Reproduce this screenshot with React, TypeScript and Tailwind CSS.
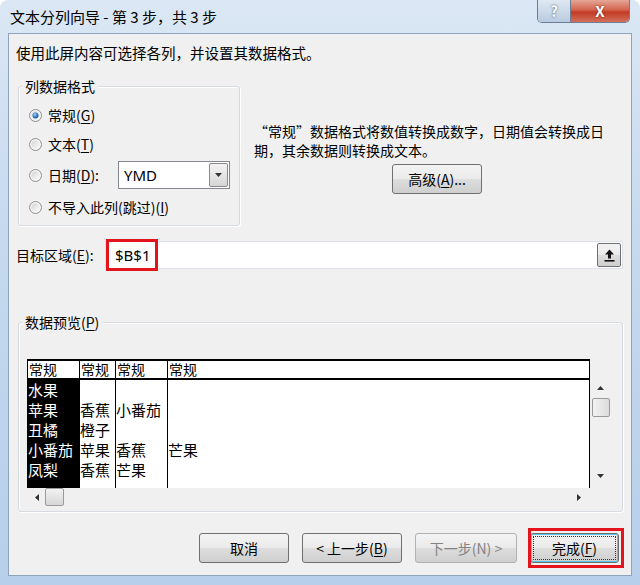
import React from 'react'

function Radio({ checked }: { checked?: boolean }) {
  return (
    <svg width="13" height="13" viewBox="0 0 13 13" className="shrink-0">
      <defs>
        <linearGradient id="rg" x1="0" y1="0" x2="1" y2="1">
          <stop offset="0" stopColor="#d4d4d4" />
          <stop offset="1" stopColor="#fbfbfb" />
        </linearGradient>
        <radialGradient id="rd" cx="0.4" cy="0.35" r="0.7">
          <stop offset="0" stopColor="#a9d3f7" />
          <stop offset="0.5" stopColor="#3b86d4" />
          <stop offset="1" stopColor="#1c4f91" />
        </radialGradient>
      </defs>
      <circle cx="6.5" cy="6.5" r="6" fill="#f4f4f4" stroke="#8f8f8f" />
      <circle cx="6.5" cy="6.5" r="4.2" fill="url(#rg)" />
      {checked && <circle cx="6.5" cy="6.5" r="3" fill="url(#rd)" />}
    </svg>
  )
}

function Btn({ children, className = '', muted }: { children: React.ReactNode; className?: string; muted?: boolean }) {
  return (
    <div
      className={`h-[30px] flex items-center justify-center rounded-[3px] border border-[#707070] bg-[linear-gradient(#f3f3f3_0%,#ebebeb_48%,#dddddd_52%,#cfcfcf_100%)] text-[14px] ${muted ? 'text-[#838383] border-[#adb2b5]' : 'text-black'} ${className}`}
    >
      {children}
    </div>
  )
}

function Tri({ dir }: { dir: 'up' | 'down' | 'left' | 'right' }) {
  const pts = {
    up: '0,4 3.5,0 7,4',
    down: '0,0 7,0 3.5,4',
    left: '4,0 4,7 0,3.5',
    right: '0,0 0,7 4,3.5',
  }[dir]
  const horiz = dir === 'left' || dir === 'right'
  return (
    <svg width={horiz ? 4 : 7} height={horiz ? 7 : 4} viewBox={horiz ? '0 0 4 7' : '0 0 7 4'}>
      <polygon points={pts} fill="#333" />
    </svg>
  )
}

const rows = [
  ['水果', '', '', ''],
  ['苹果', '香蕉', '小番茄', ''],
  ['丑橘', '橙子', '', ''],
  ['小番茄', '苹果', '香蕉', '芒果'],
  ['凤梨', '香蕉', '芒果', ''],
]

export default function App() {
  return (
    <div className="w-[640px] h-[585px] flex flex-col overflow-hidden rounded-t-[8px] bg-[linear-gradient(180deg,#dbe7f4_0%,#c6d9ee_40%,#b7cfea_100%)] font-['Noto_Sans_CJK_SC','Microsoft_YaHei',sans-serif] text-black">
      {/* title bar */}
      <div className="h-[33px] shrink-0 flex items-start relative">
        <div className="pl-[10px] pt-[6px] text-[15px] leading-[22px] whitespace-pre">文本分列向导 - 第 3 步，共 3 步</div>
        <div className="ml-auto mr-[10px] flex h-[23px] rounded-b-[5px] border border-t-0 border-[#6b7d92] overflow-hidden">
          <div className="w-[33px] flex items-center justify-center bg-[linear-gradient(#dfe8f2,#b9cbe0)] border-r border-[#6b7d92] text-[15px] font-bold text-[#fff] [text-shadow:0_0_2px_#2c3e58]">
            ?
          </div>
          <div className="w-[58px] flex items-center justify-center bg-[linear-gradient(#e5a696_0%,#d4644e_45%,#c23a24_55%,#d3705a_100%)] text-[15px] font-bold text-white [text-shadow:0_0_2px_#5a1008]">
            X
          </div>
        </div>
      </div>

      {/* client area */}
      <div className="mx-[8px] h-[543px] shrink-0 bg-[#f0f0f0] border border-[#8ea3bd] pl-[7px] pr-[8px] flex flex-col">
        <div className="mt-[9px] h-[20px] leading-[20px] text-[14.5px]">使用此屏内容可选择各列，并设置其数据格式。</div>

        <div className="flex mt-[23px]">
          {/* group: 列数据格式 */}
          <div className="ml-[2px] w-[222px] h-[140px] relative border border-[#d5dbe0] rounded-[3px] shadow-[inset_1px_1px_0_#fff,1px_1px_0_#fff] pl-[10px] pr-[9px] pt-[14px] text-[14px]">
            <span className="absolute -top-[11px] left-[3px] px-[3px] bg-[#f0f0f0] leading-[20px]">列数据格式</span>
            <div className="h-[29px] flex items-center gap-[6px]">
              <Radio checked />
              <span>常规(<u className="underline-offset-2">G</u>)</span>
            </div>
            <div className="h-[29px] flex items-center gap-[6px]">
              <Radio />
              <span>文本(<u className="underline-offset-2">T</u>)</span>
            </div>
            <div className="h-[32px] flex items-center gap-[6px]">
              <Radio />
              <span>日期(<u className="underline-offset-2">D</u>):</span>
              <div className="ml-auto w-[112px] h-[28px] flex border border-[#828790] bg-white">
                <div className="flex-1 pl-[5px] flex items-center text-[15px] font-['Noto_Sans',sans-serif]">YMD</div>
                <div className="w-[19px] my-[1px] mr-[1px] flex items-center justify-center border border-[#8a8a8a] rounded-[2px] bg-[linear-gradient(#f4f4f4,#d6d6d6)]">
                  <Tri dir="down" />
                </div>
              </div>
            </div>
            <div className="h-[32px] flex items-center gap-[6px]">
              <Radio />
              <span>不导入此列(跳过)(<u className="underline-offset-2">I</u>)</span>
            </div>
          </div>

          {/* description */}
          <div className="ml-[14px] mt-[36px] text-[14px] leading-[19px]">
            <div>“常规”数据格式将数值转换成数字，日期值会转换成日</div>
            <div>期，其余数据则转换成文本。</div>
            <Btn className="ml-[138px] mt-[4px] w-[90px] h-[29px]">
              高级(<u className="underline-offset-2">A</u>)...
            </Btn>
          </div>
        </div>

        {/* target */}
        <div className="flex items-center mt-[15px] h-[28px]">
          <div className="w-[89px] text-[14px]">目标区域(<u className="underline-offset-2">E</u>):</div>
          <div className="relative flex-1 h-[28px] bg-white border border-[#dde2e8] flex items-center">
            <span className="pl-[9px] text-[15px] font-['Noto_Sans',sans-serif]">$B$1</span>
            <div className="absolute left-[0px] -top-[3px] w-[52px] h-[32px] border-[3px] border-[#e3141c]" />
            <div className="ml-auto mr-[1px] w-[24px] h-[24px] flex items-center justify-center border border-[#707070] rounded-[2px] bg-[linear-gradient(#f3f3f3_0%,#ebebeb_48%,#dddddd_52%,#cfcfcf_100%)]">
              <svg width="11" height="13" viewBox="0 0 11 13">
                <path d="M5.5 0.5 L10 5.5 L7 5.5 L7 9.5 L4 9.5 L4 5.5 L1 5.5 Z" fill="#111" />
                <rect x="0.5" y="11" width="10" height="1.6" fill="#111" />
              </svg>
            </div>
          </div>
        </div>

        {/* preview group */}
        <div className="ml-[2px] mt-[53px] h-[190px] relative border border-[#d5dbe0] rounded-[3px] shadow-[inset_1px_1px_0_#fff,1px_1px_0_#fff] pl-[8px] pt-[36px]">
          <span className="absolute -top-[11px] left-[3px] px-[3px] bg-[#f0f0f0] text-[14px] leading-[20px]">
            数据预览(<u className="underline-offset-2">P</u>)
          </span>
          <div className="grid grid-cols-[563px_21px] grid-rows-[21px_108px_18px]">
            {/* header */}
            <div className="flex border-t-2 border-b-2 border-x border-black bg-white leading-[17px] text-[14px]">
              <div className="w-[52px] border-r border-black pl-[1px]">常规</div>
              <div className="w-[36px] border-r border-black pl-[1px]">常规</div>
              <div className="w-[52px] border-r border-black pl-[1px]">常规</div>
              <div className="flex-1 pl-[1px]">常规</div>
            </div>
            <div />
            {/* body */}
            <div className="flex border-x border-black bg-white leading-[20px] text-[15px] overflow-hidden">
              <div className="w-[52px] border-r border-black bg-black text-white">
                {rows.map((r, i) => (
                  <div key={i} className="h-[20px] whitespace-nowrap">{r[0]}</div>
                ))}
              </div>
              <div className="w-[36px] border-r border-black">
                {rows.map((r, i) => (
                  <div key={i} className="h-[20px] whitespace-nowrap">{r[1]}</div>
                ))}
              </div>
              <div className="w-[52px] border-r border-black">
                {rows.map((r, i) => (
                  <div key={i} className="h-[20px] whitespace-nowrap">{r[2]}</div>
                ))}
              </div>
              <div className="flex-1">
                {rows.map((r, i) => (
                  <div key={i} className="h-[20px]">{r[3]}</div>
                ))}
              </div>
            </div>
            {/* vertical scrollbar */}
            <div className="flex flex-col items-center bg-[#f0f0f0]">
              <div className="mt-[6px]"><Tri dir="up" /></div>
              <div className="mt-[8px] w-[18px] h-[19px] rounded-[2px] border border-[#9a9a9a] bg-[linear-gradient(90deg,#f2f2f2,#dcdcdc)]" />
              <div className="mt-auto mb-[10px]"><Tri dir="down" /></div>
            </div>
            {/* horizontal scrollbar */}
            <div className="flex items-center bg-[#f0f0f0]">
              <div className="ml-[8px]"><Tri dir="left" /></div>
              <div className="ml-[6px] w-[19px] h-[18px] rounded-[2px] border border-[#9a9a9a] bg-[linear-gradient(#f2f2f2,#d6d6d6)]" />
              <div className="ml-auto mr-[9px]"><Tri dir="right" /></div>
            </div>
            <div />
          </div>
        </div>

        {/* buttons */}
        <div className="mt-[21px] flex justify-end gap-[13px] pr-[4px]">
          <Btn className="w-[90px]">取消</Btn>
          <Btn className="w-[100px]">&lt; 上一步(<u className="underline-offset-2">B</u>)</Btn>
          <Btn className="w-[102px]" muted>下一步(N) &gt;</Btn>
          <div className="relative">
            <Btn className="w-[89px] border-[#3c7fb1] shadow-[inset_0_0_0_1px_#56c3e9]">
              <span className="absolute inset-[3px] border border-dotted border-[#333] rounded-[1px]" />
              完成(<u className="underline-offset-2">F</u>)
            </Btn>
            <div className="absolute -left-[2px] -top-[5px] w-[96px] h-[40px] border-[3px] border-[#e3141c]" />
          </div>
        </div>
      </div>
    </div>
  )
}
